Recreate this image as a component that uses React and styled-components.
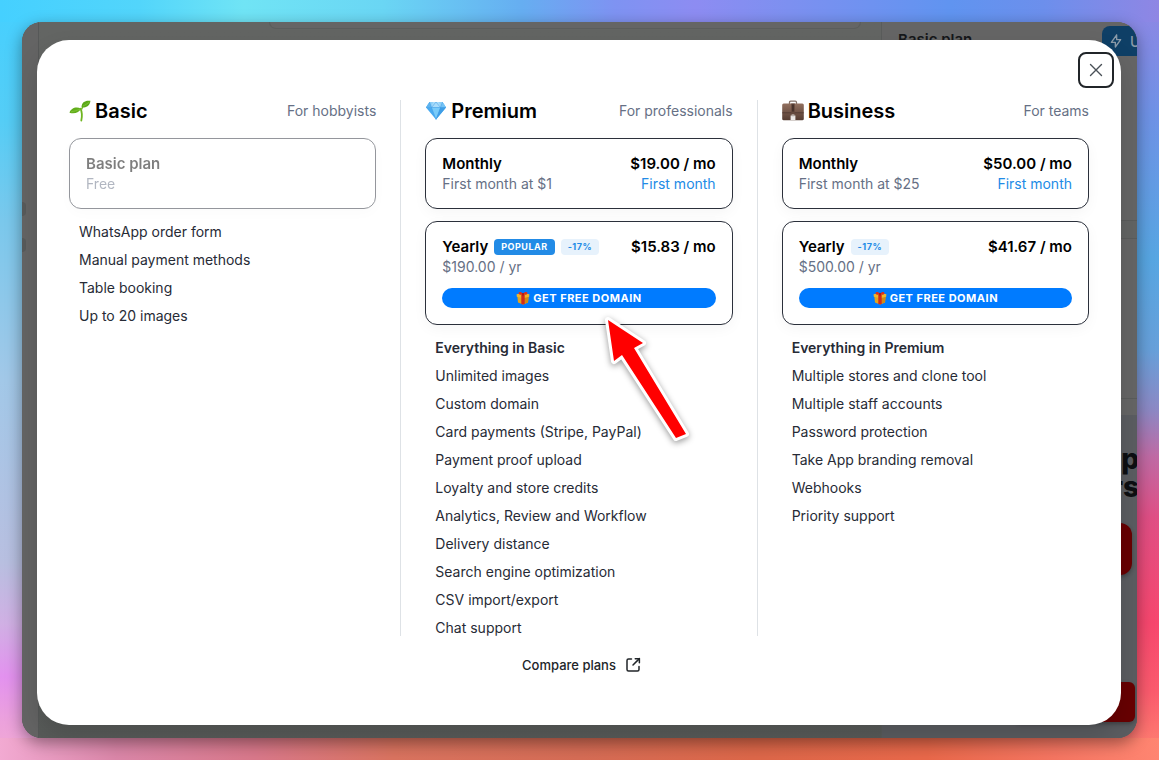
import React from "react";
import styled, { createGlobalStyle } from "styled-components";

const GlobalStyle = createGlobalStyle`
  * {
    box-sizing: border-box;
  }

  body {
    margin: 0;
    font-family: Inter, "Liberation Sans", sans-serif;
    font-size: 14px;
    line-height: 20px;
    color: #000;
  }

  button {
    font-family: inherit;
  }
`;

const Desktop = styled.main`
  display: flex;
  min-height: 100vh;
  padding: 22px;
  background:
    linear-gradient(90deg, #45d0ff 0%, #52d5fb 12%, #70e4f5 21%, #6ad6f4 33%, #66aef1 45%, #7e93f2 53%, #8d8cf2 60%, #7d90f0 68%, #6094f0 82%, #6c8fec 90%, #8f86e4 100%) top / 100% 22px no-repeat,
    linear-gradient(90deg, #f2aad2 0%, #da86a8 10%, #d8788a 22%, #d9735f 34%, #d56c55 50%, #dc6749 65%, #e8684a 80%, #f47561 91%, #ff8571 100%) bottom / 100% 22px no-repeat,
    linear-gradient(180deg, #45d0ff 0%, #55cdf6 16%, #7ac8ec 29%, #a2c8e8 50%, #b8bfe0 74%, #d0b0e4 82%, #e392ef 89%, #eca2dc 95%, #f2aad2 100%) left / 50% 100% no-repeat,
    linear-gradient(180deg, #8f86e4 0%, #6f92e6 15%, #57a6e2 34%, #67a0da 46%, #8d88c4 54%, #bf6ba5 60%, #e04f85 68%, #f7476e 82%, #fb5b6d 91%, #ff8571 100%) right / 50% 100% no-repeat;
`;

const WindowShadow = styled.div`
  display: flex;
  flex: 1;
  border-radius: 20px;
  box-shadow: 0 5px 16px rgba(0, 0, 0, 0.4);
`;

const Window = styled.section`
  position: relative;
  display: flex;
  flex: 1;
  padding: 18px 16px 13px 15px;
  border-radius: 20px;
  overflow: hidden;
  background: #626463;
`;

/* the dimmed page under the modal */
const Backdrop = styled.div`
  position: absolute;
  inset: 0;
  display: grid;
  grid-template-columns: 17px 1fr 256px;
  background: linear-gradient(180deg, #636563 0%, #616362 60%, #585b59 100%);
`;

const Rail = styled.div`
  border-right: 1px solid #565858;
  background: #646464;
`;

const RailDot = styled.div`
  width: 4px;
  height: 14px;
  margin-top: ${(props) => props.$top}px;
  border-radius: 0 7px 7px 0;
  background: #585a5a;
`;

const Canvas = styled.div`
  padding: 0 20px 0 230px;
`;

const CanvasCard = styled.div`
  height: 7px;
  border: 1px solid #5b5d5c;
  border-top: 0;
  border-radius: 0 0 12px 12px;
  background: #656565;
`;

const Side = styled.div`
  display: flex;
  flex-direction: column;
  border-left: 1px solid #5a5c5b;
  background: #656565;
`;

const SideHeader = styled.div`
  display: flex;
  justify-content: space-between;
  height: 199px;
  padding: 4px 0 0 16px;
  border-bottom: 1px solid #5a5c5b;
  color: #15171a;
  font-size: 15px;
  font-weight: 600;
  line-height: 28px;
`;

const Upgrade = styled.button`
  display: flex;
  align-items: center;
  gap: 6px;
  width: 35px;
  height: 30px;
  padding: 0 0 0 6px;
  border: 0;
  border-radius: 8px 0 0 0;
  overflow: hidden;
  background: #0e3f66;
  color: #8a9aa8;
  font-size: 14px;
  font-weight: 500;
  white-space: nowrap;

  svg {
    flex: none;
  }
`;

const SideBand = styled.div`
  height: 18px;
  border-bottom: 1px solid #5a5c5b;
  background: #626463;
`;

const SideGap = styled.div`
  height: ${(props) => props.$height}px;
  border-bottom: ${(props) => (props.$line ? "1px solid #5a5c5b" : "0")};
`;

const Promo = styled.div`
  display: flex;
  flex: 1;
  flex-direction: column;
  align-items: flex-end;
  padding-top: 30px;
  overflow: hidden;
  background: #5b5d61;
`;

const PromoText = styled.div`
  margin-right: -2px;
  color: #0d0f12;
  font-size: 28px;
  font-weight: 800;
  line-height: 28px;
  text-align: right;
`;

const PromoBlock = styled.div`
  width: 120px;
  height: ${(props) => props.$height}px;
  margin: ${(props) => props.$margin};
  border-radius: ${(props) => props.$radius}px;
  background: #680002;
  box-shadow: 0 2px 4px rgba(0, 0, 0, 0.3);
`;

const Modal = styled.div`
  position: relative;
  display: flex;
  flex: 1;
  flex-direction: column;
  padding: 60px 32px 48px;
  border-radius: 32px;
  background: #fff;
  box-shadow: 0 12px 24px rgba(0, 0, 0, 0.14);
`;

const CloseButton = styled.button`
  position: absolute;
  top: 12px;
  right: 7px;
  display: flex;
  align-items: center;
  justify-content: center;
  width: 36px;
  height: 36px;
  padding: 0;
  border: 2px solid #212529;
  border-radius: 8px;
  background: #fff;
  color: #495057;
  cursor: pointer;
`;

const Plans = styled.div`
  display: grid;
  grid-template-columns: 1fr 1px 1fr 1px 1fr;
  column-gap: 24px;
`;

const Divider = styled.div`
  background: #dee2e6;
`;

const PlanHeader = styled.header`
  display: flex;
  align-items: center;
  justify-content: space-between;
  height: 22px;
  margin-bottom: 16px;
`;

const PlanTitle = styled.h2`
  display: flex;
  align-items: center;
  gap: 4px;
  margin: 0;
  font-size: 20px;
  font-weight: 600;
  line-height: 22px;
`;

const Muted = styled.span`
  color: #667085;
`;

const Options = styled.div`
  display: flex;
  flex-direction: column;
  gap: 12px;
`;

const OptionCard = styled.button`
  display: flex;
  flex-direction: column;
  width: 100%;
  padding: 15px 16px 14px;
  border: 1px solid #2b303b;
  border-radius: 12px;
  background: #fff;
  box-shadow: 0 4px 14px rgba(0, 0, 0, 0.04);
  color: #000;
  font-size: 14px;
  line-height: 20px;
  text-align: left;
  opacity: ${(props) => (props.disabled ? 0.5 : 1)};
  cursor: ${(props) => (props.disabled ? "default" : "pointer")};
`;

const OptionRow = styled.span`
  display: flex;
  align-items: center;
  justify-content: space-between;
  width: 100%;
`;

const OptionName = styled.span`
  display: flex;
  align-items: center;
  gap: 6px;
  font-size: 15px;
  font-weight: 600;
`;

const FirstMonth = styled.span`
  color: #228be6;
`;

const Badge = styled.span`
  height: 16px;
  padding: 0 7px;
  border-radius: 4px;
  background: ${(props) => (props.$filled ? "#228be6" : "#e7f2fc")};
  color: ${(props) => (props.$filled ? "#fff" : "#228be6")};
  font-size: 9px;
  font-weight: 700;
  letter-spacing: 0.5px;
  line-height: 16px;
`;

const FreeDomain = styled.span`
  display: flex;
  align-items: center;
  justify-content: center;
  gap: 3px;
  width: 100%;
  height: 20px;
  margin: 11px 0 2px;
  border-radius: 10px;
  background: #007bff;
  color: #fff;
  font-size: 11px;
  font-weight: 700;
  letter-spacing: 0.5px;
`;

const Features = styled.ul`
  display: flex;
  flex-direction: column;
  gap: 12px;
  margin: 0;
  padding: 15px 10px 0;
  color: #272b36;
  line-height: 16px;
  list-style: none;
`;

const Feature = styled.li`
  font-weight: ${(props) => (props.$strong ? 600 : 400)};
`;

const CompareLink = styled.a`
  display: flex;
  align-items: center;
  gap: 8px;
  align-self: center;
  margin-top: 19px;
  padding-left: 6px;
  color: #212529;
  font-size: 13px;
  font-weight: 500;
  text-decoration: none;
`;

const Arrow = styled.svg`
  position: absolute;
  left: 559px;
  top: 265px;
  pointer-events: none;
  filter: drop-shadow(0 2px 3px rgba(0, 0, 0, 0.4));
`;

const SeedlingIcon = () => (
  <svg width="22" height="22" viewBox="0 0 22 22" aria-hidden="true">
    <path d="M12.300 20.500c1-4.500.8-8.500-.8-11.800" fill="none" stroke="#6fb51f" strokeWidth="1.800" strokeLinecap="round" />
    <path d="M12.500 9.500c.5-1.500 1-2.400 2-3.500" fill="none" stroke="#6fb51f" strokeWidth="1.400" />
    <path d="M.500 12.800c1.200-4.600 7-6.800 11.500-4-1.600 3.600-6.200 5.500-11.500 4z" fill="#62ae1c" />
    <path d="M12.500 7c.2-4.800 3.800-7 8.900-6.200-.4 4.600-4 7.700-8.900 6.200z" fill="#5aa818" />
    <path d="M2 12c3-.5 6-2 9.500-3M14 6c2-.8 4.500-2.500 6.500-4" fill="none" stroke="#86c93c" strokeWidth=".7" />
  </svg>
);

const GemIcon = () => (
  <svg width="22" height="22" viewBox="0 0 22 22" aria-hidden="true">
    <path d="M4.500 2h13L21 7.500 11 19.500 1 7.500z" fill="#49aaf0" />
    <path d="M4.500 2h13L21 7.500H1z" fill="#8fd0f8" />
    <path d="M4.500 2 6.500 7.500H1z" fill="#5db3ef" />
    <path d="m8 2-1.500 5.500h9L14 2z" fill="#a9dcfa" />
    <path d="M17.500 2 15.500 7.500H21z" fill="#75c4f6" />
    <path d="M6.500 7.500h9L11 19.500z" fill="#79cbf9" />
    <path d="M15.500 7.500H21L11 19.500z" fill="#3f9ee6" />
    <path d="M1 7.500h20M6.500 7.500 11 19.500 15.500 7.500M4.500 2l2 5.500L11 2l4.500 5.500 2-5.500" fill="none" stroke="#3f9be5" strokeWidth=".5" />
  </svg>
);

const BriefcaseIcon = () => (
  <svg width="22" height="22" viewBox="0 0 22 22" aria-hidden="true">
    <defs>
      <linearGradient id="leather" x1="0" x2="0" y1="0" y2="1">
        <stop offset="0" stopColor="#92705f" />
        <stop offset="1" stopColor="#553c31" />
      </linearGradient>
    </defs>
    <path d="M7.500 4V2.500c0-.8.400-1.300 1.200-1.300h4.600c.8 0 1.200.5 1.200 1.300V4" fill="none" stroke="#85736a" strokeWidth="1.300" />
    <rect x=".2" y="3.500" width="21.600" height="16.800" rx="1.500" fill="url(#leather)" />
    <path d="M.200 12.800h21.600" stroke="#49342b" strokeWidth=".7" />
    <rect x="9.200" y="3.500" width="3.600" height="11" fill="#654a3e" />
    <rect x="10.200" y="4.500" width="1.600" height="7" fill="#432f27" />
    <path d="M8.600 15.500h4.800v4.500H8.600z" fill="#ece9e6" />
    <path d="M9.600 14.200h2.800v2H9.600z" fill="#b7aca5" />
  </svg>
);

const GiftIcon = () => (
  <svg width="14" height="14" viewBox="0 0 14 14" aria-hidden="true">
    <path d="M1.300 4.800h11.400l-.7 6.800L7 13.600l-5-2z" fill="#e3a41f" />
    <path d="M7 5.500l5.700-.7-.7 6.800-5 2z" fill="#cf8a16" />
    <path d="M.600 3.200 7 2l6.400 1.200-.2 2.600L7 7.300.800 5.800z" fill="#efb62c" />
    <path d="M5.300 3.500h3.400v9.400L7 13.600l-1.700-.7z" fill="#cf2a1c" />
    <path d="M6.700 3.600C4.500 4.200 2.300 3.700 2.500 2.100 2.800.400 5.800.500 6.700 2.600zM7.300 3.600c2.200.6 4.400.1 4.200-1.500C11.200.400 8.200.500 7.300 2.600z" fill="#d8301f" />
    <path d="M6.100 2.100h1.800v2.300H6.100z" fill="#a81d12" />
  </svg>
);

const BoltIcon = () => (
  <svg width="16" height="16" viewBox="0 0 24 24" fill="none" stroke="currentColor" strokeWidth="2" strokeLinecap="round" strokeLinejoin="round" aria-hidden="true">
    <path d="M13 3v7h6l-8 11v-7H5l8-11" />
  </svg>
);

const CloseIcon = () => (
  <svg width="14" height="14" viewBox="0 0 14 14" fill="none" stroke="currentColor" strokeWidth="1.400" strokeLinecap="round" aria-hidden="true">
    <path d="M1.500 1.500l11 11M12.500 1.500l-11 11" />
  </svg>
);

const ExternalIcon = () => (
  <svg width="18" height="18" viewBox="0 0 24 24" fill="none" stroke="currentColor" strokeWidth="2" strokeLinecap="round" strokeLinejoin="round" aria-hidden="true">
    <path d="M10 4H6a2 2 0 0 0-2 2v12a2 2 0 0 0 2 2h12a2 2 0 0 0 2-2v-4" />
    <path d="M12 12l8.500-8.500" />
    <path d="M15 3.500h5.500V9" />
  </svg>
);

const plans = [
  {
    name: "Basic",
    icon: <SeedlingIcon />,
    audience: "For hobbyists",
    options: [{ name: "Basic plan", note: "Free", disabled: true }],
    features: ["WhatsApp order form", "Manual payment methods", "Table booking", "Up to 20 images"],
  },
  {
    name: "Premium",
    icon: <GemIcon />,
    audience: "For professionals",
    options: [
      { name: "Monthly", price: "$19.00 / mo", note: "First month at $1", firstMonth: true },
      { name: "Yearly", price: "$15.83 / mo", note: "$190.00 / yr", popular: true, discount: "-17%", freeDomain: true },
    ],
    inherits: "Everything in Basic",
    features: [
      "Unlimited images",
      "Custom domain",
      "Card payments (Stripe, PayPal)",
      "Payment proof upload",
      "Loyalty and store credits",
      "Analytics, Review and Workflow",
      "Delivery distance",
      "Search engine optimization",
      "CSV import/export",
      "Chat support",
    ],
  },
  {
    name: "Business",
    icon: <BriefcaseIcon />,
    audience: "For teams",
    options: [
      { name: "Monthly", price: "$50.00 / mo", note: "First month at $25", firstMonth: true },
      { name: "Yearly", price: "$41.67 / mo", note: "$500.00 / yr", discount: "-17%", freeDomain: true },
    ],
    inherits: "Everything in Premium",
    features: [
      "Multiple stores and clone tool",
      "Multiple staff accounts",
      "Password protection",
      "Take App branding removal",
      "Webhooks",
      "Priority support",
    ],
  },
];

const Option = ({ option }) => (
  <OptionCard type="button" disabled={option.disabled}>
    <OptionRow>
      <OptionName>
        {option.name}
        {option.popular && <Badge $filled>POPULAR</Badge>}
        {option.discount && <Badge>{option.discount}</Badge>}
      </OptionName>
      {option.price && <OptionName>{option.price}</OptionName>}
    </OptionRow>
    <OptionRow>
      <Muted>{option.note}</Muted>
      {option.firstMonth && <FirstMonth>First month</FirstMonth>}
    </OptionRow>
    {option.freeDomain && (
      <FreeDomain>
        <GiftIcon />
        GET FREE DOMAIN
      </FreeDomain>
    )}
  </OptionCard>
);

const Plan = ({ plan }) => (
  <section>
    <PlanHeader>
      <PlanTitle>
        {plan.icon}
        {plan.name}
      </PlanTitle>
      <Muted>{plan.audience}</Muted>
    </PlanHeader>
    <Options>
      {plan.options.map((option) => (
        <Option key={option.name} option={option} />
      ))}
    </Options>
    <Features>
      {plan.inherits && <Feature $strong>{plan.inherits}</Feature>}
      {plan.features.map((feature) => (
        <Feature key={feature}>{feature}</Feature>
      ))}
    </Features>
  </section>
);

const App = () => (
  <>
    <GlobalStyle />
    <Desktop>
      <WindowShadow>
        <Window>
          <Backdrop>
            <Rail>
              <RailDot $top={180} />
              <RailDot $top={22} />
            </Rail>
            <Canvas>
              <CanvasCard />
            </Canvas>
            <Side>
              <SideHeader>
                Basic plan
                <Upgrade type="button">
                  <BoltIcon />U
                </Upgrade>
              </SideHeader>
              <SideBand />
              <SideGap $height={160} $line />
              <SideGap $height={16} />
              <Promo>
                <PromoText>
                  p<br />
                  rs
                </PromoText>
                <PromoBlock $height={52} $margin="22px 5px 0 0" $radius={12} />
                <PromoBlock $height={40} $margin="107px 2px 0 0" $radius={6} />
              </Promo>
            </Side>
          </Backdrop>
          <Modal role="dialog" aria-label="Plans">
            <CloseButton type="button" aria-label="Close">
              <CloseIcon />
            </CloseButton>
            <Plans>
              {plans.map((plan, i) => (
                <React.Fragment key={plan.name}>
                  {i > 0 && <Divider />}
                  <Plan plan={plan} />
                </React.Fragment>
              ))}
            </Plans>
            <CompareLink href="#compare">
              Compare plans
              <ExternalIcon />
            </CompareLink>
            <Arrow width="110" height="150" viewBox="0 0 110 150" aria-hidden="true">
              <path
                d="M12 15 47 38 38 43 90 129 80 133 26 50 18 56z"
                fill="#ff0000"
                stroke="#fff"
                strokeWidth="6"
                strokeLinejoin="round"
                paintOrder="stroke"
              />
            </Arrow>
          </Modal>
        </Window>
      </WindowShadow>
    </Desktop>
  </>
);

export default App;
